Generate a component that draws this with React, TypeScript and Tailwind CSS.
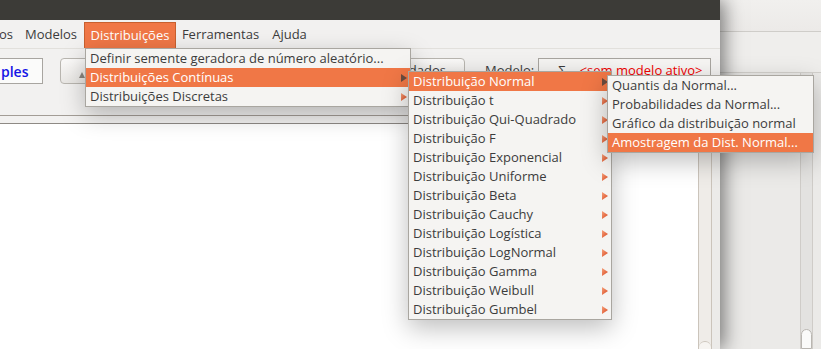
import React from 'react';

const FONT = "font-['Open_Sans','Noto_Sans',sans-serif]";

const Arrow = ({ active }: { active?: boolean }) => (
  <svg width="6" height="8" viewBox="0 0 6 8" className="shrink-0">
    <defs>
      <linearGradient id="arrowFill" x1="0" y1="0" x2="1" y2="1">
        <stop offset="0%" stopColor="#f6a27c" />
        <stop offset="100%" stopColor="#d8441c" />
      </linearGradient>
    </defs>
    <path d="M0 0 L6 4 L0 8 Z" fill={active ? '#6a4c3f' : 'url(#arrowFill)'} />
  </svg>
);

type Item = { label: string; sub?: boolean; active?: boolean };

const Menu = ({ items, className }: { items: Item[]; className: string }) => (
  <div
    className={`absolute z-30 bg-[#f5f4f2] border border-[#a9a6a0] shadow-[0_8px_24px_rgba(0,0,0,0.26)] ${className}`}
  >
    {items.map((it) => (
      <div
        key={it.label}
        className={`h-[19px] flex items-center justify-between pl-[4px] pr-[3px] text-[13px] font-medium leading-none whitespace-nowrap ${
          it.active ? 'bg-[#f07746] text-white' : 'text-[#3c3c3c]'
        }`}
      >
        <span>{it.label}</span>
        {it.sub && <Arrow active={it.active} />}
      </div>
    ))}
  </div>
);

const MENU_ITEMS = [
  { label: 'os', w: 'w-[19px]', pad: 'justify-start -ml-[1px]' },
  { label: 'Modelos', w: 'w-[66px]', pad: 'justify-center' },
  { label: 'Distribuições', w: 'w-[92px]', pad: 'justify-center', active: true },
  { label: 'Ferramentas', w: 'w-[89px]', pad: 'justify-center' },
  { label: 'Ajuda', w: 'w-[49px]', pad: 'justify-center' },
];

const DIST = [
  'Distribuição Normal',
  'Distribuição t',
  'Distribuição Qui-Quadrado',
  'Distribuição F',
  'Distribuição Exponencial',
  'Distribuição Uniforme',
  'Distribuição Beta',
  'Distribuição Cauchy',
  'Distribuição Logística',
  'Distribuição LogNormal',
  'Distribuição Gamma',
  'Distribuição Weibull',
  'Distribuição Gumbel',
];

const App = () => {
  return (
    <div className={`relative w-[821px] h-[349px] overflow-hidden flex bg-[#ecebe9] ${FONT}`}>
      {/* main window */}
      <div className="relative z-10 w-[720px] h-full flex flex-col bg-[#f2f1f0] shadow-[4px_0_18px_rgba(0,0,0,0.5)]">
        <div className="h-[20px] bg-[#3c3b37]" />

        {/* menubar */}
        <div className="h-[28px] pt-[2px] flex items-stretch text-[13px] font-medium text-[#3c3c3c]">
          {MENU_ITEMS.map((m) => (
            <div
              key={m.label}
              className={`${m.w} flex items-center ${m.pad} ${
                m.active ? 'bg-[#f07746] text-white border border-b-0 border-[#c8602f]' : ''
              }`}
            >
              {m.label}
            </div>
          ))}
        </div>

        {/* toolbar */}
        <div className="h-[67px] pt-[9px] flex items-start border-t border-[#e2e0dc]">
          <div className="-ml-[12px] w-[55px] h-[26px] pl-[12px] flex items-center bg-[#fbfbfa] border border-[#a8a5a0] text-[14px] font-semibold text-[#1515e6]">
            ples
          </div>
          <div className="ml-[17px] w-[70px] h-[26px] rounded-[4px] border border-[#b9b6b0] bg-gradient-to-b from-[#fbfaf9] to-[#e9e7e4] flex items-end pl-[18px] pb-[5px]">
            <div className="w-0 h-0 border-l-[3px] border-r-[3px] border-b-[6px] border-l-transparent border-r-transparent border-b-[#8a8780]" />
          </div>
          <div className="ml-[200px] w-[135px] h-[26px] rounded-[4px] border border-[#b9b6b0] bg-gradient-to-b from-[#fbfaf9] to-[#e9e7e4] flex items-center justify-end pr-[18px] text-[13px] font-medium text-[#3c3c3c] whitespace-nowrap">
            dados
          </div>
          <div className="ml-[20px] h-[26px] flex items-center text-[13px] font-medium text-[#3c3c3c]">Modelo:</div>
          <div className="ml-[4px] w-[173px] h-[26px] border border-[#a8a5a0] bg-[#f6f5f3] flex items-center pl-[19px] text-[13px] font-medium whitespace-nowrap">
            <span className="text-[#3c3c3c]">Σ</span>
            <span className="ml-[14px] text-[#f00000]">&lt;sem modelo ativo&gt;</span>
          </div>
        </div>

        {/* separators */}
        <div className="h-[9px] border-t border-b border-t-[#a39d96] border-b-[#8e8a85] bg-[#f2f1f0]" />

        {/* content */}
        <div className="flex-1 flex">
          <div className="flex-1 bg-white" />
          <div className="w-[14px] flex flex-col border-l border-r border-[#cbc4bb] bg-[#efece8]">
            <div className="flex-1" />
            <div className="h-[8px] rounded-t-[6px] border-t border-[#cbc4bb] bg-[#f6f4f1]" />
          </div>
          <div className="w-[8px] bg-[#ecebe9]" />
        </div>
      </div>

      {/* window behind */}
      <div className="flex-1 flex flex-col">
        <div className="h-[32px] bg-gradient-to-b from-[#f1f0ee] to-[#eceae8] border-b border-[#cfcdc9]" />
        <div className="h-[41px] bg-[#efeeec] border-b border-[#d3d1cd]" />
        <div className="flex-1 flex bg-[#ebeae8]">
          <div className="w-[80px]" />
          <div className="w-[13px] flex flex-col border-l border-r border-[#cfccc8] bg-[#e3e2e0]">
            <div className="flex-1" />
            <div className="h-[20px] rounded-t-[6px] border border-[#b9b6b1] bg-[#fafaf9]" />
          </div>
        </div>
      </div>

      {/* Distribuições menu */}
      <Menu
        className="left-[85px] top-[48px] w-[326px]"
        items={[
          { label: 'Definir semente geradora de número aleatório...' },
          { label: 'Distribuições Contínuas', sub: true, active: true },
          { label: 'Distribuições Discretas', sub: true },
        ]}
      />
      <Menu
        className="left-[408px] top-[71px] w-[204px]"
        items={DIST.map((d, i) => ({ label: d, sub: true, active: i === 0 }))}
      />
      <Menu
        className="left-[607px] top-[75px] w-[207px]"
        items={[
          { label: 'Quantis da Normal...' },
          { label: 'Probabilidades da Normal...' },
          { label: 'Gráfico da distribuição normal' },
          { label: 'Amostragem da Dist. Normal...', active: true },
        ]}
      />
    </div>
  );
};

export default App;
